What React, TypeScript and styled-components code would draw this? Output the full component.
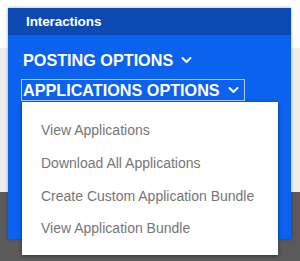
import React from 'react'
import styled, { createGlobalStyle } from 'styled-components'

const GlobalStyle = createGlobalStyle`
  html, body {
    margin: 0;
    padding: 0;
  }
  body {
    width: 300px;
    height: 261px;
    overflow: hidden;
    font-family: 'Liberation Sans', Arial, sans-serif;
  }
`

const Page = styled.div`
  position: relative;
  width: 300px;
  height: 261px;
  display: grid;
  grid-template-rows: 48px 144px 1fr;
`

const Band = styled.div<{ $bg: string }>`
  background: ${p => p.$bg};
`

const Panel = styled.div`
  position: absolute;
  left: 8px;
  top: 8px;
  width: 283px;
  height: 231px;
  background: #0b62ee;
  box-shadow: 0 0 3px rgba(0, 0, 0, 0.35);
  display: flex;
  flex-direction: column;
`

const Header = styled.div`
  height: 27px;
  background: #0b4ab2;
  color: #fff;
  font-weight: bold;
  font-size: 13.5px;
  letter-spacing: -0.1px;
  display: flex;
  align-items: center;
  padding-left: 18px;
`

const Body = styled.div`
  display: flex;
  flex-direction: column;
  align-items: flex-start;
  padding: 14px 0 0 13px;
  gap: 8px;
  position: relative;
`

const Toggle = styled.div<{ $open?: boolean }>`
  display: flex;
  align-items: center;
  gap: 8px;
  color: #fff;
  font-weight: bold;
  font-size: 16.2px;
  height: 20px;
  padding: 0 5px 0 1px;
  border: 1px solid ${p => (p.$open ? 'rgba(220,230,255,0.8)' : 'transparent')};
`

const Menu = styled.div`
  position: absolute;
  left: 14px;
  top: 67px;
  width: 256px;
  height: 153px;
  background: #fff;
  box-shadow: 0 1px 4px rgba(0, 0, 0, 0.45);
  display: flex;
  flex-direction: column;
  padding-top: 12px;
  box-sizing: border-box;
`

const Item = styled.div`
  height: 32.7px;
  display: flex;
  align-items: center;
  padding-left: 19px;
  color: #767676;
  font-size: 14px;
`

const Chevron = () => (
  <svg width="11" height="8" viewBox="0 0 11 8">
    <path d="M1.5 2 L5.5 6 L9.5 2" stroke="#fff" strokeWidth="2" fill="none" strokeLinecap="round" strokeLinejoin="round" />
  </svg>
)

export default function App() {
  return (
    <>
      <GlobalStyle />
      <Page>
        <Band $bg="#ffffff" />
        <Band $bg="#eeeeee" />
        <Band $bg="#5a5a5a" />
        <Panel>
          <Header>Interactions</Header>
          <Body>
            <Toggle>
              POSTING OPTIONS <Chevron />
            </Toggle>
            <Toggle $open>
              APPLICATIONS OPTIONS <Chevron />
            </Toggle>
            <Menu>
              <Item>View Applications</Item>
              <Item>Download All Applications</Item>
              <Item>Create Custom Application Bundle</Item>
              <Item>View Application Bundle</Item>
            </Menu>
          </Body>
        </Panel>
      </Page>
    </>
  )
}
